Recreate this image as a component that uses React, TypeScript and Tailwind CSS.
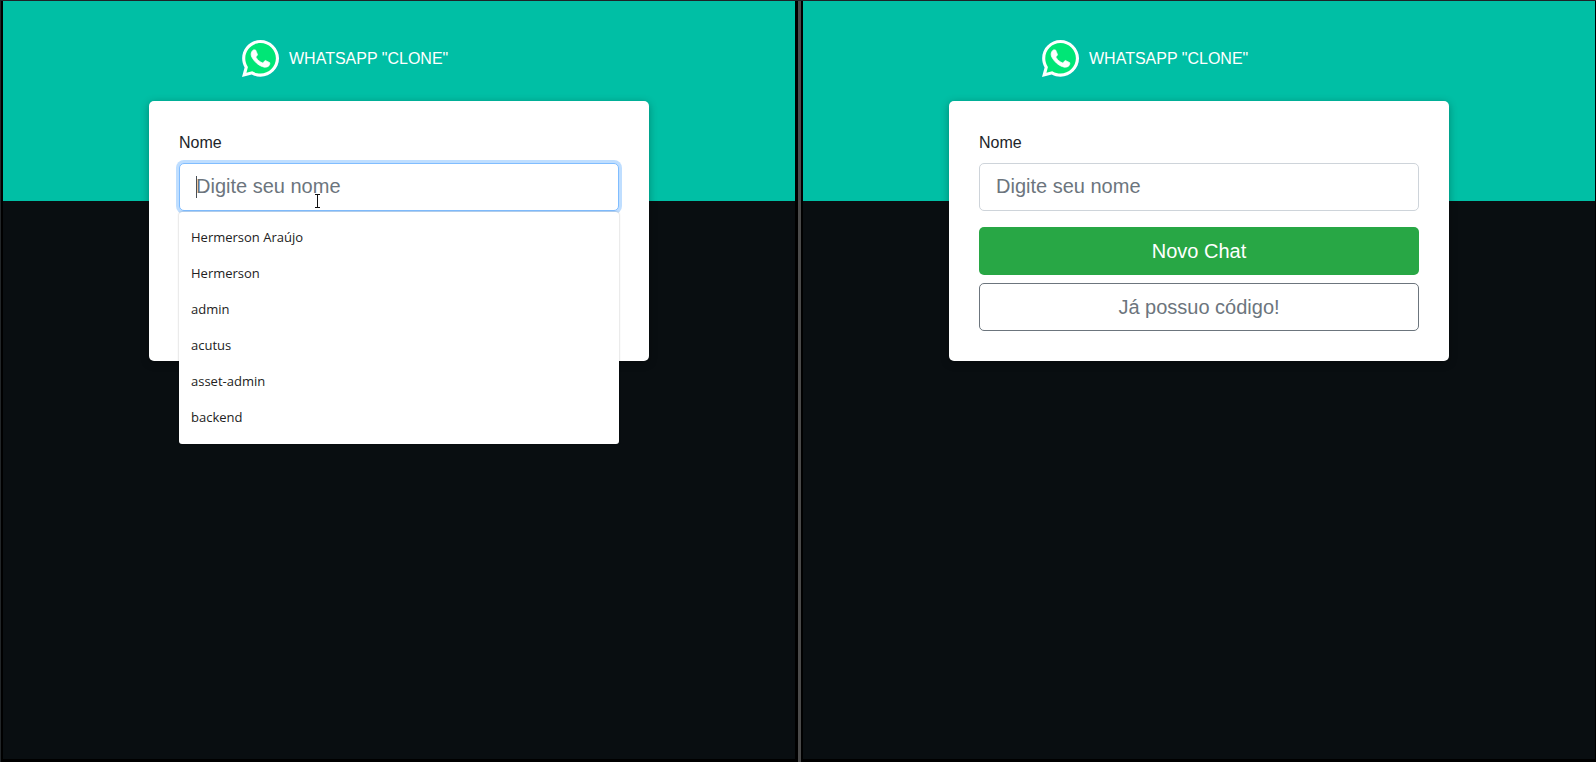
import React, { useId } from "react";

const suggestions = ["Hermerson Araújo", "Hermerson", "admin", "acutus", "asset-admin", "backend"];

function Logo() {
  return (
    <svg viewBox="0 32 460 460" className="size-[38px] shrink-0" aria-hidden="true">
      <path
        fill="#fff"
        d="M380.9 97.1C339 55.1 283.2 32 223.9 32c-122.4 0-222 99.6-222 222 0 39.1 10.2 77.3 29.6 111L0 480l117.7-30.9c32.4 17.7 68.9 27 106.1 27h.1c122.3 0 224.1-99.6 224.1-222 0-59.3-25.2-115-67.1-157z"
      />
      <path
        fill="#00e676"
        d="M223.9 438.7c-33.2 0-65.7-8.9-94-25.7l-6.7-4-69.8 18.3L72 359.2l-4.4-7c-18.5-29.4-28.2-63.3-28.2-98.2 0-101.7 82.8-184.5 184.6-184.5 49.3 0 95.6 19.2 130.4 54.1 34.8 34.9 56.2 81.2 56.1 130.5 0 101.8-84.9 184.6-186.6 184.6z"
      />
      <path
        fill="#fff"
        stroke="#fff"
        strokeWidth="10"
        d="M325.1 300.5c-5.5-2.8-32.8-16.2-37.9-18-5.1-1.9-8.8-2.8-12.5 2.8-3.7 5.6-14.3 18-17.6 21.8-3.2 3.7-6.5 4.2-12 1.4-32.6-16.3-54-29.1-75.5-66-5.7-9.8 5.7-9.1 16.3-30.3 1.8-3.7.9-6.9-.5-9.7-1.4-2.8-12.5-30.1-17.1-41.2-4.5-10.8-9.1-9.3-12.5-9.5-3.2-.2-6.9-.2-10.6-.2-3.7 0-9.7 1.4-14.8 6.9-5.1 5.6-19.4 19-19.4 46.3 0 27.3 19.9 53.7 22.6 57.4 2.8 3.7 39.1 59.7 94.8 83.8 35.2 15.2 49 16.5 66.6 13.9 10.7-1.6 32.8-13.4 37.4-26.4 4.6-13 4.6-24.1 3.2-26.4-1.3-2.5-5-3.9-10.5-6.6z"
      />
    </svg>
  );
}

function TextPointer() {
  return (
    <svg viewBox="0 0 9 16" className="pointer-events-none absolute top-[30px] left-[134px] z-20 h-4 w-[9px]" aria-hidden="true">
      <path d="M2 1.5h5M4.5 2v12M2 14.5h5" fill="none" stroke="#fff" strokeWidth="3" />
      <path d="M2 1.5h5M4.5 2v12M2 14.5h5" fill="none" stroke="#111" strokeWidth="1" />
    </svg>
  );
}

function LoginPane({ active = false }: { active?: boolean }) {
  const id = useId();
  return (
    <section className="relative min-w-0 flex-1 bg-[#090e11]">
      <div className="bg-[linear-gradient(#00bfa5,#00bfa5)] bg-[length:100%_200px] bg-no-repeat px-4">
        <div className="mx-auto w-full max-w-[500px]">
          <header className="flex h-[100px] items-center gap-[9px] pt-4 pl-[93px] text-white">
            <Logo />
            <h1 className="text-base">WHATSAPP "CLONE"</h1>
          </header>
          <form
            className="rounded-[5px] bg-white p-[30px] shadow-[0_2px_8px_rgba(0,0,0,0.3)]"
            onSubmit={(e) => e.preventDefault()}
          >
            <label htmlFor={id} className="mb-2 block text-base text-[#212529]">
              Nome
            </label>
            <div className="relative mb-4">
              <input
                id={id}
                type="text"
                autoComplete="off"
                placeholder="Digite seu nome"
                className={
                  "block h-12 w-full rounded-[5px] border bg-white px-4 pb-[2px] text-xl text-[#495057] outline-none placeholder:text-[#6c757d] " +
                  (active ? "border-[#80bdff] ring-3 ring-[#bfdeff]" : "border-[#ced4da]")
                }
              />
              {active && (
                <>
                  <span className="absolute top-[13px] left-[17px] h-[22px] w-px bg-[#495057]" />
                  <TextPointer />
                  <ul className="absolute top-[49px] left-0 z-10 w-full rounded-[3px] bg-white py-2 font-['Open_Sans','Noto_Sans',sans-serif] text-[13px] text-[#222] shadow-[0_0_2px_rgba(0,0,0,0.3)]">
                    {suggestions.map((name) => (
                      <li key={name} className="flex h-9 items-center px-3">
                        {name}
                      </li>
                    ))}
                  </ul>
                </>
              )}
            </div>
            <button type="submit" className="block h-12 w-full rounded-[5px] bg-[#28a745] text-xl text-white">
              Novo Chat
            </button>
            <button
              type="button"
              className="mt-2 block h-12 w-full rounded-[5px] border border-[#6c757d] text-xl text-[#6c757d]"
            >
              Já possuo código!
            </button>
          </form>
        </div>
      </div>
    </section>
  );
}

export default function App() {
  return (
    <main className="flex min-h-screen border-t border-[#1f2328] bg-black pr-px font-['Liberation_Sans',Arial,sans-serif]">
      <div className="w-[3px] shrink-0 border-l border-[#222629]" />
      <div className="flex min-w-0 flex-1 pb-[3px]">
        <LoginPane active />
        <div className="-mb-[3px] flex w-2 shrink-0 pl-[3px]">
          <div className="w-[3px] bg-[#4a4a4a]" />
        </div>
        <LoginPane />
      </div>
    </main>
  );
}
